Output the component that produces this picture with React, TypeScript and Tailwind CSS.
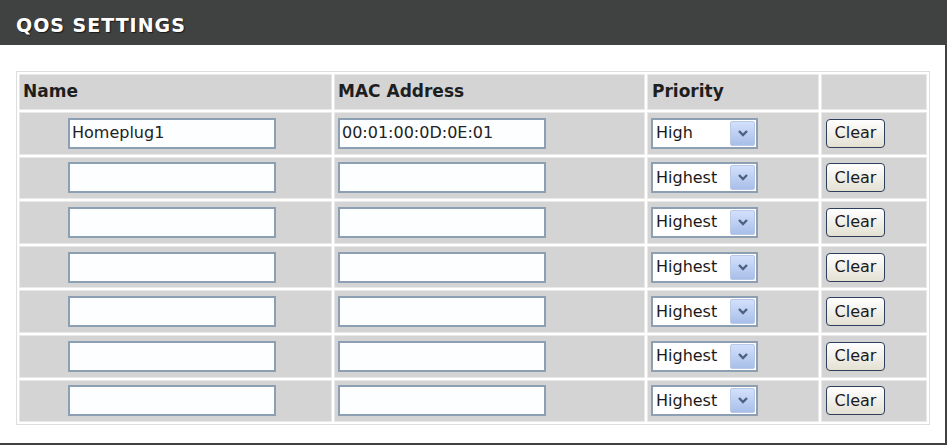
import React from 'react';

const rows = [
    { name: 'Homeplug1', mac: '00:01:00:0D:0E:01', priority: 'High' },
    { name: '', mac: '', priority: 'Highest' },
    { name: '', mac: '', priority: 'Highest' },
    { name: '', mac: '', priority: 'Highest' },
    { name: '', mac: '', priority: 'Highest' },
    { name: '', mac: '', priority: 'Highest' },
    { name: '', mac: '', priority: 'Highest' },
];

const cell = 'border border-[#e9e9e9] bg-[#d4d4d4] p-0 align-middle';

function TextBox({ value }: { value: string }) {
    return (
        <div className="flex h-[31px] w-[208px] items-center border-2 border-[#8d9fb3] bg-[#fdfeff] pl-[2px] text-[16px] text-[#222]">
            {value}
        </div>
    );
}

function PrioritySelect({ value }: { value: string }) {
    return (
        <div className="flex h-[31px] w-[107px] items-center justify-between border-2 border-[#8d9fb3] bg-white pl-[3px] pr-[1px] text-[16px] text-[#1a1a1a]">
            <span>{value}</span>
            <div className="flex h-[25px] w-[25px] items-center justify-center rounded-[2px] border border-[#b7c8e8] bg-gradient-to-b from-[#d3e0fb] to-[#a9bfe9]">
                <svg width="12" height="9" viewBox="0 0 12 9">
                    <path d="M2 2 L6 6 L10 2" fill="none" stroke="#4d6185" strokeWidth="2.4" />
                </svg>
            </div>
        </div>
    );
}

function ClearButton() {
    return (
        <div className="ml-[4px] flex h-[29px] w-[59px] items-center justify-center rounded-[4px] border-[1.5px] border-[#2e3f5e] bg-gradient-to-b from-white to-[#e4e1d3] text-[16px] text-[#1a1a1a]">
            Clear
        </div>
    );
}

export default function App() {
    return (
        <div className="h-[445px] w-[948px] bg-white" style={{ fontFamily: '"DejaVu Sans", Verdana, sans-serif' }}>
            {/* Section title */}
            <div className="flex h-[45px] w-[947px] items-center bg-[#404141] pl-[16px] pt-[5px]">
                <span className="text-[19px] font-bold tracking-[1px] text-white [text-shadow:1px_1px_1px_#1a1a1a]">
                    QOS SETTINGS
                </span>
            </div>

            {/* Body */}
            <div className="h-[400px] w-[947px] border-r-2 border-b-2 border-[#404141] pl-[16px] pt-[26px]">
                <table className="border-separate border-[#dedede] border [border-spacing:2px]">
                    <thead>
                        <tr className="h-[36px]">
                            <th className={`${cell} w-[313px] pl-[3px] text-left text-[17px] font-bold text-[#1e1e1e]`}>Name</th>
                            <th className={`${cell} w-[311px] pl-[3px] text-left text-[17px] font-bold text-[#1e1e1e]`}>MAC Address</th>
                            <th className={`${cell} w-[172px] pl-[4px] text-left text-[17px] font-bold text-[#1e1e1e]`}>Priority</th>
                            <th className={`${cell} w-[106px]`}></th>
                        </tr>
                    </thead>
                    <tbody>
                        {rows.map((r, i) => (
                            <tr key={i} className="h-[42.6px]">
                                <td className={`${cell} pl-[48px]`}>
                                    <TextBox value={r.name} />
                                </td>
                                <td className={`${cell} pl-[3px]`}>
                                    <TextBox value={r.mac} />
                                </td>
                                <td className={`${cell} pl-[3px]`}>
                                    <PrioritySelect value={r.priority} />
                                </td>
                                <td className={cell}>
                                    <ClearButton />
                                </td>
                            </tr>
                        ))}
                    </tbody>
                </table>
            </div>
        </div>
    );
}
